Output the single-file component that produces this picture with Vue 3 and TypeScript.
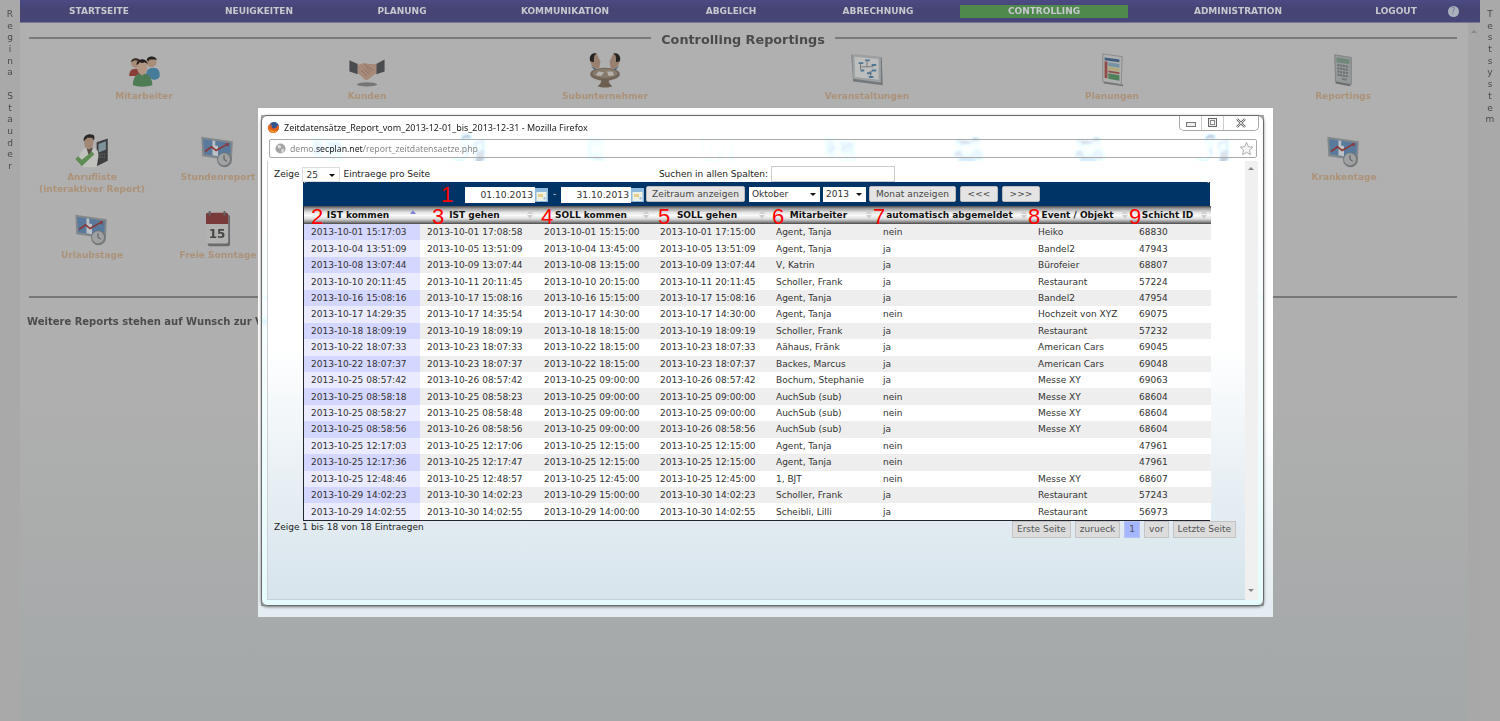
<script setup lang="ts">
type Row = string[];
const raw = `2013-10-01 15:17:03|2013-10-01 17:08:58|2013-10-01 15:15:00|2013-10-01 17:15:00|Agent, Tanja|nein|Heiko|68830
2013-10-04 13:51:09|2013-10-05 13:51:09|2013-10-04 13:45:00|2013-10-05 13:51:09|Agent, Tanja|ja|Bandel2|47943
2013-10-08 13:07:44|2013-10-09 13:07:44|2013-10-08 13:15:00|2013-10-09 13:07:44|V, Katrin|ja|Bürofeier|68807
2013-10-10 20:11:45|2013-10-11 20:11:45|2013-10-10 20:15:00|2013-10-11 20:11:45|Scholler, Frank|ja|Restaurant|57224
2013-10-16 15:08:16|2013-10-17 15:08:16|2013-10-16 15:15:00|2013-10-17 15:08:16|Agent, Tanja|ja|Bandel2|47954
2013-10-17 14:29:35|2013-10-17 14:35:54|2013-10-17 14:30:00|2013-10-17 14:30:00|Agent, Tanja|nein|Hochzeit von XYZ|69075
2013-10-18 18:09:19|2013-10-19 18:09:19|2013-10-18 18:15:00|2013-10-19 18:09:19|Scholler, Frank|ja|Restaurant|57232
2013-10-22 18:07:33|2013-10-23 18:07:33|2013-10-22 18:15:00|2013-10-23 18:07:33|Aähaus, Fränk|ja|American Cars|69045
2013-10-22 18:07:37|2013-10-23 18:07:37|2013-10-22 18:15:00|2013-10-23 18:07:37|Backes, Marcus|ja|American Cars|69048
2013-10-25 08:57:42|2013-10-26 08:57:42|2013-10-25 09:00:00|2013-10-26 08:57:42|Bochum, Stephanie|ja|Messe XY|69063
2013-10-25 08:58:18|2013-10-25 08:58:23|2013-10-25 09:00:00|2013-10-25 09:00:00|AuchSub (sub)|nein|Messe XY|68604
2013-10-25 08:58:27|2013-10-25 08:58:48|2013-10-25 09:00:00|2013-10-25 09:00:00|AuchSub (sub)|nein|Messe XY|68604
2013-10-25 08:58:56|2013-10-26 08:58:56|2013-10-25 09:00:00|2013-10-26 08:58:56|AuchSub (sub)|ja|Messe XY|68604
2013-10-25 12:17:03|2013-10-25 12:17:06|2013-10-25 12:15:00|2013-10-25 12:15:00|Agent, Tanja|nein||47961
2013-10-25 12:17:36|2013-10-25 12:17:47|2013-10-25 12:15:00|2013-10-25 12:15:00|Agent, Tanja|nein||47961
2013-10-25 12:48:46|2013-10-25 12:48:57|2013-10-25 12:45:00|2013-10-25 12:45:00|1, BJT|nein|Messe XY|68607
2013-10-29 14:02:23|2013-10-30 14:02:23|2013-10-29 15:00:00|2013-10-30 14:02:23|Scholler, Frank|ja|Restaurant|57243
2013-10-29 14:02:55|2013-10-30 14:02:55|2013-10-29 14:00:00|2013-10-30 14:02:55|Scheibli, Lilli|ja|Restaurant|56973`;
const rows: Row[] = raw.split("\n").map((l) => l.split("|"));

const leftName = "Regina Stauder".split("");
const rightName = "Testsystem".split("");
const navItems = ["STARTSEITE", "NEUIGKEITEN", "PLANUNG", "KOMMUNIKATION", "ABGLEICH", "ABRECHNUNG", "CONTROLLING", "ADMINISTRATION", "LOGOUT"];

interface Tile { kind: string; lines: string[] }
const row1: Tile[] = [
  { kind: "people", lines: ["Mitarbeiter"] },
  { kind: "hands", lines: ["Kunden"] },
  { kind: "sub", lines: ["Subunternehmer"] },
  { kind: "board", lines: ["Veranstaltungen"] },
  { kind: "plan", lines: ["Planungen"] },
  { kind: "calc", lines: ["Reportings"] },
];
const row2: Tile[] = [
  { kind: "call", lines: ["Anrufliste", "(interaktiver Report)"] },
  { kind: "chart", lines: ["Stundenreport"] },
  { kind: "chart", lines: [] },
  { kind: "call", lines: [] },
  { kind: "plan", lines: [] },
  { kind: "board", lines: [] },
  { kind: "chart", lines: [] },
  { kind: "people", lines: [] },
  { kind: "people", lines: [] },
  { kind: "call", lines: [] },
  { kind: "chart", lines: ["Krankentage"] },
];
const row3: Tile[] = [
  { kind: "chart", lines: ["Urlaubstage"] },
  { kind: "cal", lines: ["Freie Sonntage"] },
];

interface Head { label: string; num: string; left: number; sorted?: boolean }
const heads: Head[] = [
  { label: "IST kommen", num: "2", left: 7, sorted: true },
  { label: "IST gehen", num: "3", left: 12 },
  { label: "SOLL kommen", num: "4", left: 4 },
  { label: "SOLL gehen", num: "5", left: 5 },
  { label: "Mitarbeiter", num: "6", left: 3 },
  { label: "automatisch abgemeldet", num: "7", left: -3 },
  { label: "Event / Objekt", num: "8", left: -3 },
  { label: "Schicht ID", num: "9", left: -3 },
];
const widths = [116, 117, 116, 116, 107, 155, 101, 79];
</script>

<template>
  <div class="page">
    <aside class="strip">
      <span v-for="(c, i) in leftName" :key="i" class="letter">{{ c === " " ? "\u00a0" : c }}</span>
    </aside>

    <div class="main">
      <nav class="nav">
        <a v-for="item in navItems" :key="item" class="nav-item" :class="{ active: item === 'CONTROLLING' }">{{ item }}</a>
        <span class="nav-help">?</span>
      </nav>

      <div class="body">
        <main class="report">
          <div class="title-row">
            <span class="rule"></span>
            <h1 class="title">Controlling Reportings</h1>
            <span class="rule"></span>
          </div>

          <section v-for="(grid, g) in [row1, row2, row3]" :key="g" class="tiles" :class="'tiles-' + g">
            <div v-for="(t, i) in grid" :key="i" class="tile">
              <svg class="ico" viewBox="0 0 40 40">
                <template v-if="t.kind === 'people'">
                  <path d="M22 26c0-6 3-9 8-9s7 3 7 8c0 3-3 5-7 5z" fill="#3f9bd0" />
                  <circle cx="28" cy="11" r="5.500" fill="#d9a98a" /><path d="M23 9c0-5 10-6 11 0l-2-1h-6l-1 2z" fill="#2e2a28" />
                  <path d="M4 26c0-5 2-8 7-8s6 3 6 8z" fill="#c7433b" />
                  <circle cx="11" cy="12" r="5" fill="#d9a98a" /><path d="M6 11c0-5 9-6 10-1l-6-1z" fill="#4a342a" />
                  <path d="M8 36c0-9 4-13 10-13s11 4 11 13c-6 2-15 2-21 0z" fill="#4f9c5a" />
                  <path d="M15 22l3 4 3-4z" fill="#e3b08e" />
                  <path d="M12.500 15c0 6 2 9 5.500 9s5.500-3 5.500-9-2-6-5.500-6-5.500 1-5.500 6z" fill="#e7b595" />
                  <path d="M12 14c-1-7 11-9 12-1l-3-2-3 1-3-1-1 2z" fill="#2f2622" />
                </template>
                <template v-else-if="t.kind === 'hands'">
                  <ellipse cx="20" cy="35" rx="11" ry="2.200" fill="#8f8f8f" />
                  <path d="M1 9l9 4v11l-9-3z" fill="#5b5d61" /><path d="M39 8l-9 5v11l9-3z" fill="#5b5d61" />
                  <path d="M10 14l7-2 5 1 8 0v10l-9 7c-3 1-5-1-6-3l-5-4z" fill="#d9a68a" />
                  <path d="M17 13c2 4 7 3 10 7M14 20l6 6M16.500 18l6 6M19.500 17l5 5" stroke="#ad7d62" stroke-width=".8" fill="none" />
                </template>
                <template v-else-if="t.kind === 'sub'">
                  <path d="M5 15l5 7 4-2zM35 15l-5 7-4-2z" fill="#3f87b8" />
                  <path d="M4 8c0-5 4-7 7-6l4 8-1 7c-3 2-6 1-8-2-1-2-2-4-2-7z" fill="#c59a7e" />
                  <path d="M4 10C2 4 7 0 11 2c-3 1-3 4-3 9z" fill="#2f2d2c" />
                  <path d="M36 8c0-5-4-7-7-6l-4 8 1 7c3 2 6 1 8-2 1-2 2-4 2-7z" fill="#c59a7e" />
                  <path d="M36 10c2-6-3-10-7-8 3 1 3 4 3 9z" fill="#2f2d2c" />
                  <ellipse cx="20" cy="24" rx="16" ry="7" fill="#8f7a62" />
                  <ellipse cx="20" cy="23" rx="13.500" ry="5" fill="#a9957d" />
                  <path d="M13 21l6 1-3 4-6-1zM22 21l6 0 2 4-6 1z" fill="#ddd8cf" />
                  <path d="M16 30h8c0 3 1 5 4 7-4 2-12 2-16 0 3-2 4-4 4-7z" fill="#8b7459" />
                </template>
                <template v-else-if="t.kind === 'board'">
                  <path d="M3 3l33 3 1 30-32-4z" fill="#8d9498" />
                  <path d="M4 2l31 3 0 28-30-4z" fill="#bcc3c6" /><path d="M6.500 5l26 2.500V30L7 27z" fill="#e6e9ea" />
                  <path d="M11 11h5v2h-5zM18 8h5v2h-5zM25 13h5v2h-5zM13 19h4v2h-4zM25 19h5v2h-5zM20 22h5v2h-5zM22 26h5v2h-5z" fill="#4f95c4" />
                  <path d="M13 13v6M20 10v6H14M20 16h7M25 21l-3 1M24 24v2" stroke="#666" stroke-width=".7" fill="none" />
                </template>
                <template v-else-if="t.kind === 'plan'">
                  <path d="M11 34l21 3v-2L11 32z" fill="#8d8f8d" />
                  <path d="M10 2l21 3-1 30-20-3z" fill="#d4d7d5" stroke="#8f9290" stroke-width=".7" />
                  <path d="M12 6l16 2v3L12 9z" fill="#3f72ab" /><path d="M12 10l3 .4v18L12 28z" fill="#c9534a" />
                  <path d="M16 11l12 2v4l-12-2z" fill="#7fb6d6" /><path d="M16 16l12 2v3l-12-2z" fill="#e0d070" />
                  <path d="M16 20l12 2v2l-12-2z" fill="#d0574e" /><path d="M16 23l12 2v6l-12-2z" fill="#4fa160" />
                </template>
                <template v-else-if="t.kind === 'calc'">
                  <path d="M12 34l16 3v-2l-16-3z" fill="#7d8183" />
                  <path d="M11 3l18 3v29l-17-3z" fill="#b5bbbb" stroke="#868b8b" stroke-width=".7" />
                  <path d="M13 6l14 2v5l-14-2z" fill="#7fa88f" />
                  <path d="M14 14l12 2M14 17.500l12 2M14 21l12 2M14 24.500l12 2" stroke="#83898a" stroke-width="2.200" stroke-dasharray="2.200 .8" />
                  <path d="M19 29l5 1" stroke="#8c9192" stroke-width="2" />
                </template>
                <template v-else-if="t.kind === 'call'">
                  <path d="M25 10l12-4v24l-12 6z" fill="#4a4c4e" /><path d="M27 12l8-3v9l-8 3z" fill="#8fb6c0" />
                  <path d="M28 23h6M28 26h6" stroke="#74777a" stroke-width="1.500" stroke-dasharray="1.500 1" />
                  <path d="M6 34c0-12 2-17 9-18l7 0c4 1 5 5 5 9l-2 12H12z" fill="#ecebe6" />
                  <path d="M14 16l3 10 4-10z" fill="#6b5d52" />
                  <path d="M11.500 9c0 6 2 8.500 5 8.500s5-3 5-8-2-6-5-6-5 1-5 5.500z" fill="#d2a283" />
                  <path d="M11 9c-1-7 6-9 10-7 2 1 2 3 1 6l-2-3-5 0z" fill="#34312f" />
                  <path d="M2 28l3-3 4 4 11-9 2.500 3L9 36z" fill="#62b24f" />
                </template>
                <template v-else-if="t.kind === 'chart'">
                  <path d="M2 4l34 5-1 21L3 25z" fill="#9ea6ab" /><path d="M4 6.500l30 4.200-1 17L5 23z" fill="#5d97d2" />
                  <path d="M14 8l3 .5v5l3 .5v11l-6-1z" fill="#e5ecf2" />
                  <path d="M6 20l7-5 5 4 12-7" stroke="#cb3b3b" stroke-width="1.800" fill="none" />
                  <path d="M28 11l4 0-1 4z" fill="#cb3b3b" />
                  <circle cx="27" cy="29" r="8" fill="#8d9193" />
                  <circle cx="26.500" cy="28.500" r="6.500" fill="#c2c5c6" /><path d="M26.500 24v4.500l3 2" stroke="#555" stroke-width=".9" fill="none" />
                </template>
                <template v-else>
                  <rect x="9" y="4" width="24" height="34" rx="2" fill="#808284" />
                  <rect x="7" y="2" width="24" height="33" rx="2" fill="#d9d9d6" />
                  <path d="M7 4a2 2 0 0 1 2-2h20a2 2 0 0 1 2 2v10H7z" fill="#ad4040" />
                  <path d="M11 0v5M27 0v5" stroke="#777" stroke-width="2" />
                  <text x="19" y="29" text-anchor="middle" class="cal-num">15</text>
                </template>
              </svg>
              <div v-for="l in t.lines" :key="l" class="tile-label">{{ l }}</div>
            </div>
          </section>

          <div class="hr"></div>
          <p class="further">Weitere Reports stehen auf Wunsch zur Verfügung.</p>
        </main>
        <div class="page-scroll"><i class="sc-up"></i></div>
      </div>
    </div>

    <aside class="strip">
      <span v-for="(c, i) in rightName" :key="i" class="letter">{{ c }}</span>
    </aside>

    <div class="popup">
      <div class="window">
        <div class="titlebar">
          <svg class="fx" viewBox="0 0 14 14">
            <circle cx="7.500" cy="6.500" r="5.500" fill="#34548f" />
            <path d="M12.800 5c.7 3.800-2 8-6.300 8C3 13 .7 10 1 6.500c.3-1.200.8-2.200 1.500-3-.1.800 0 1.300.3 1.700.6-1 1.500-1.500 2.700-1.600-.8 1-1 2-.4 3 .7 1.200 2 1.700 3.300 1.300 1.800-.5 2.500-1.700 2.700-3.300.2.300.4.300.7.400z" fill="#e2611c" />
            <path d="M2 8c.5 2.500 2.500 4.300 5 4.300 2 0 3.500-1 4.500-2.300-1.500 1-3.500 1.300-5.500.6C4 10 2.800 9.200 2 8z" fill="#f2a52c" />
          </svg>
          <span class="win-title">Zeitdatensätze_Report_vom_2013-12-01_bis_2013-12-31 - Mozilla Firefox</span>
          <div class="win-btns">
            <span class="wb"><i class="wb-min"></i></span>
            <span class="wb"><i class="wb-max"></i></span>
            <span class="wb wb-last">
              <svg viewBox="0 0 12 10" class="wb-x"><path d="M2 1l8 8M10 1L2 9" stroke="#666" stroke-width="2.400" fill="none" /><path d="M2 1l8 8M10 1L2 9" stroke="#eee" stroke-width=".9" fill="none" /></svg>
            </span>
          </div>
        </div>
        <div class="urlbar">
          <svg class="globe" viewBox="0 0 12 12"><circle cx="6" cy="6" r="5.500" fill="#a4a4a4" /><path d="M3 2l3 1 1 2-2 1-2-1zM7 7l3-1-1 4-2 1z" fill="#e0e0e0" /></svg>
          <span class="url"><span class="u-dim">demo.</span><span class="u-host">secplan.net</span><span class="u-dim">/report_zeitdatensaetze.php</span></span>
          <svg class="star" viewBox="0 0 16 16"><path d="M8 1.500l2 4.500 4.800.5-3.600 3.200 1 4.800L8 12.100l-4.200 2.400 1-4.800L1.200 6.500 6 6z" fill="#f4f4f4" stroke="#aaa" /></svg>
        </div>

        <div class="client">
          <div class="content">
            <div class="top-row">
              <div class="len">
                Zeige
                <span class="sel sel-len">25</span>
                Eintraege pro Seite
              </div>
              <label class="search">Suchen in allen Spalten: <input class="search-in" type="text" /></label>
            </div>

            <div class="tbl">
              <div class="toolbar">
                <span class="num-one">1</span>
                <input class="date" value="01.10.2013" readonly />
                <svg class="cal" viewBox="0 0 13 14"><rect width="13" height="14" fill="#8fb9dd" /><rect x="1.500" y="4" width="10" height="9" fill="#eef1e4" /><rect x="3" y="6" width="5" height="3" fill="#e9d08a" /><rect x="8.500" y="9" width="2" height="2.500" fill="#9fc4e4" /></svg>
                <span class="dash">-</span>
                <input class="date" value="31.10.2013" readonly />
                <svg class="cal" viewBox="0 0 13 14"><rect width="13" height="14" fill="#8fb9dd" /><rect x="1.500" y="4" width="10" height="9" fill="#eef1e4" /><rect x="3" y="6" width="5" height="3" fill="#e9d08a" /><rect x="8.500" y="9" width="2" height="2.500" fill="#9fc4e4" /></svg>
                <button class="btn b-range">Zeitraum anzeigen</button>
                <span class="sel sel-month">Oktober</span>
                <span class="sel sel-year">2013</span>
                <button class="btn b-month">Monat anzeigen</button>
                <button class="btn b-prev">&lt;&lt;&lt;</button>
                <button class="btn b-next">&gt;&gt;&gt;</button>
              </div>
              <table class="data">
                <colgroup>
                  <col v-for="(w, i) in widths" :key="i" :style="{ width: w + 'px' }" />
                </colgroup>
                <thead>
                  <tr>
                    <th v-for="h in heads" :key="h.num">
                      <span class="num" :style="{ left: h.left + 'px' }">{{ h.num }}</span>
                      {{ h.label }}
                      <span class="sort"><i class="up" :class="{ on: h.sorted }"></i><i class="down" :class="{ off: h.sorted }"></i></span>
                    </th>
                  </tr>
                </thead>
                <tbody>
                  <tr v-for="(r, i) in rows" :key="i" :class="i % 2 ? 'even' : 'odd'">
                    <td v-for="(c, j) in r" :key="j" :class="{ s1: j === 0 }">{{ c }}</td>
                  </tr>
                </tbody>
              </table>
            </div>

            <div class="bottom-row">
              <div class="info">Zeige 1 bis 18 von 18 Eintraegen</div>
              <div class="pager">
                <a class="pg">Erste Seite</a>
                <a class="pg">zurueck</a>
                <a class="pg cur">1</a>
                <a class="pg">vor</a>
                <a class="pg">Letzte Seite</a>
              </div>
            </div>
          </div>
          <div class="win-scroll"><i class="sc-up"></i><i class="sc-down"></i></div>
        </div>
      </div>
    </div>
  </div>
</template>

<style>
html, body { margin: 0; padding: 0; }
</style>

<style scoped>
.page {
  position: relative;
  width: 1500px;
  height: 721px;
  overflow: hidden;
  display: flex;
  font-family: "DejaVu Sans", sans-serif;
  font-size: 9px;
  background: linear-gradient(#b0b0b0 0%, #afafaf 55%, #a4a8a9 100%);
  color: #333;
}
.strip {
  width: 20px;
  flex: none;
  display: flex;
  flex-direction: column;
  align-items: center;
  padding-top: 9px;
  box-sizing: border-box;
  background: #a9a9a9;
  color: #4a4a4a;
}
.letter { line-height: 11.700px; height: 11.700px; font-size: 9px; }
.main { flex: 1; min-width: 0; display: flex; flex-direction: column; }
.nav {
  height: 23px;
  box-sizing: border-box;
  flex: none;
  display: grid;
  grid-template-columns: 158px 162px 124px 202px 130px 164px 168px 220px 96px 18px;
  align-items: center;
  background: linear-gradient(#4b4a84 0%, #454472 45%, #47467a 100%);
  border-bottom: 1px solid #77778f;
  padding-top: 1px;
}
.nav-item {
  text-align: center;
  font-weight: 700;
  font-size: 9px;
  color: #c8c9cf;
  line-height: 13px;
}
.nav-item.active { background: #4f8a4c; }
.nav-help {
  width: 11px;
  height: 11px;
  border-radius: 50%;
  background: #a9b2bd;
  color: #6f7590;
  font-size: 8px;
  line-height: 11px;
  text-align: center;
  justify-self: center;
}
.body { flex: 1; min-height: 0; display: flex; }
.report { flex: 1; min-width: 0; }
.page-scroll {
  width: 12px;
  flex: none;
  background: #a8a8a8;
  display: flex;
  justify-content: center;
  padding-top: 7px;
  box-sizing: border-box;
}
.title-row {
  display: flex;
  align-items: center;
  gap: 10px;
  margin: 8px 11px 0 9px;
  height: 18px;
}
.rule { flex: 1; height: 0; border-top: 2px solid #7a7a7a; margin-top: -5px; }
.title { margin: 0; font-size: 12.800px; font-weight: 700; color: #4b4b4b; line-height: 18px; }
.tiles { display: grid; justify-items: center; align-content: start; margin-left: 9px; }
.tiles-0 { grid-template-columns: 230px 216px 260px 264px 226px 236px; height: 72px; margin-top: 2px; padding-top: 1px; box-sizing: border-box; }
.tiles-1 { grid-template-columns: 126px 126px 94px 188px 66px 176px 72px 182px 60px 188px 74px; height: 78px; margin-top: 7px; padding-top: 3px; box-sizing: border-box; }
.tiles-2 { grid-template-columns: 126px 126px; height: 50px; padding-top: 3px; box-sizing: border-box; }
.tile { text-align: center; white-space: nowrap; width: 0; display: flex; flex-direction: column; align-items: center; }
.ico { width: 38px; height: 37px; flex: none; filter: saturate(.7) brightness(.82) blur(.35px); }
.cal-num { font: 700 13px "DejaVu Sans", sans-serif; fill: #555; }
.tile-label {
  font-weight: 700;
  font-size: 9px;
  line-height: 11.500px;
  color: #ac9279;
  margin-top: 2px;
}
.tile-label + .tile-label { margin-top: 0; }
.hr { margin: 38px 11px 0 9px; border-top: 2px solid #777; }
.further { margin: 18px 0 0 7px; font-weight: 700; font-size: 10px; color: #4c4c4c; line-height: 12px; white-space: nowrap; }

.popup {
  position: absolute;
  left: 258px;
  top: 108px;
  width: 1015px;
  height: 509px;
  box-sizing: border-box;
  border-style: solid;
  border-width: 7px 9px 11px 3px;
  border-image: linear-gradient(#ffffff 60%, #e3edf2) 1;
}
.window {
  height: 100%;
  box-sizing: border-box;
  display: flex;
  flex-direction: column;
  border: 1px solid #6a6a6a;
  border-radius: 6px;
  box-shadow: 0 1px 3px rgba(0, 0, 0, .5);
  padding: 0 5px 5px;
  background: linear-gradient(rgba(255, 255, 255, .62) 0%, rgba(255, 255, 255, .62) 15%, #e6fbfd 100%);
  backdrop-filter: blur(1.500px) sepia(1) hue-rotate(170deg) saturate(1.400) brightness(1.550);
  overflow: hidden;
}
.titlebar { height: 23px; flex: none; display: flex; align-items: flex-start; position: relative; color: #111; }
.fx { width: 13px; height: 13px; margin: 5px 4px 0 0; flex: none; }
.win-title { font-family: "Noto Sans", sans-serif; font-size: 9px; line-height: 12px; margin-top: 5.500px; white-space: nowrap; color: #222; }
.win-btns {
  position: absolute;
  right: -1px;
  top: -1px;
  width: 80px;
  height: 16px;
  box-sizing: border-box;
  display: flex;
  border: 1px solid #a9a9a9;
  border-top: 0;
  border-radius: 0 0 5px 5px;
  background: rgba(255, 255, 255, .8);
}
.wb { width: 21px; display: flex; align-items: center; justify-content: center; border-right: 1px solid #ccc; }
.wb-last { flex: 1; border-right: 0; }
.wb-min { width: 8px; height: 3px; border: 1px solid #777; margin-top: 3px; background: #eee; }
.wb-max { width: 7px; height: 7px; border: 1px solid #666; box-shadow: inset 0 0 0 1px #eee, inset 0 0 0 2px #888; }
.wb-x { width: 12px; height: 10px; }
.urlbar {
  height: 19px;
  flex: none;
  box-sizing: border-box;
  margin: 0 1px 3px 2px;
  border: 1px solid #aaa;
  border-radius: 2px;
  display: flex;
  align-items: center;
  padding: 0 2px 0 5px;
  background: rgba(255, 255, 255, .35);
}
.globe { width: 11px; height: 11px; margin-right: 4px; flex: none; }
.url { font-family: "Noto Sans", sans-serif; font-size: 8.700px; flex: 1; padding-top: 1px; }
.u-dim { color: #8a8a8a; }
.u-host { color: #222; }
.star { width: 15px; height: 15px; flex: none; }
.client { flex: 1; min-height: 0; display: flex; }
.content {
  flex: 1;
  min-width: 0;
  box-sizing: border-box;
  border-left: 1px solid #cfcfcf;
  border-bottom: 1px solid #c5d0d4;
  padding-top: 5px;
  background: linear-gradient(#fff 0%, #fff 42%, #e3ecf2 80%, #d7e4ec 100%);
  display: flex;
  flex-direction: column;
}
.win-scroll {
  width: 13px;
  flex: none;
  background: #f0f0f0;
  position: relative;
}
.sc-up, .sc-down { display: block; width: 0; height: 0; border-left: 3px solid transparent; border-right: 3px solid transparent; }
.sc-up { border-bottom: 3px solid #888; }
.sc-down { border-top: 3px solid #888; }
.win-scroll .sc-up { position: absolute; left: 3px; top: 6px; }
.win-scroll .sc-down { position: absolute; left: 3px; bottom: 8px; }
.top-row {
  display: flex;
  justify-content: space-between;
  align-items: center;
  height: 16px;
  padding: 0 350px 0 6px;
  color: #222;
  font-size: 9px;
  flex: none;
}
.len { display: flex; align-items: center; gap: 3px; }
.search { display: flex; align-items: center; gap: 3px; }
.search-in { width: 124px; height: 16px; box-sizing: border-box; border: 1px solid #ccc; padding: 0; background: #fff; }
.sel {
  position: relative;
  display: inline-block;
  box-sizing: border-box;
  background: #fff;
  font-size: 9px;
  line-height: 15px;
  padding-left: 3px;
  color: #333;
}
.sel::after {
  content: "";
  position: absolute;
  right: 4px;
  top: 6px;
  border-left: 3px solid transparent;
  border-right: 3px solid transparent;
  border-top: 3px solid #111;
}
.sel-len { width: 38px; height: 15px; border: 1px solid #ddd; }
.sel-month { width: 71px; height: 15px; margin-left: 4px; }
.sel-year { width: 43px; height: 15px; margin-left: 3px; }
.tbl {
  margin-left: 35px;
  width: 907px;
  box-sizing: border-box;
  border: 1px solid #23262e;
  border-top: 0;
  flex: none;
}
.toolbar {
  height: 24px;
  background: #003366;
  border-radius: 4px 4px 0 0;
  margin: 0 -1px;
  display: flex;
  align-items: center;
  padding-left: 139px;
  box-sizing: border-box;
}
.num-one { width: 23px; font: 22px/22px "Liberation Sans", sans-serif; color: #f00; flex: none; margin-top: 1px; margin-left: -1px; margin-right: 1px; }
.date {
  width: 70px;
  height: 16px;
  box-sizing: border-box;
  border: 0;
  padding: 0 2px 0 0;
  text-align: right;
  font: 9.200px "DejaVu Sans", sans-serif;
  color: #333;
  background: #fff;
  margin-top: 1px;
}
.cal { width: 13px; height: 14px; margin-top: 1px; }
.dash { width: 13px; text-align: center; color: #ddd; font-size: 9px; }
.btn {
  height: 16px;
  box-sizing: border-box;
  border: 1px solid #bbb;
  border-radius: 2px;
  background: #e4e4e4;
  color: #444;
  font: 9px "DejaVu Sans", sans-serif;
  padding: 0;
  letter-spacing: .1px;
}
.b-range { width: 99px; margin-left: 2px; }
.b-month { width: 87px; margin-left: 3px; }
.b-prev { width: 38px; margin-left: 4px; }
.b-next { width: 38px; margin-left: 4px; }
.data { border-collapse: collapse; table-layout: fixed; width: 905px; }
.data th {
  position: relative;
  height: 18px;
  padding: 0 8px 0 0;
  font-size: 9px;
  font-weight: 700;
  color: #111;
  text-align: center;
  white-space: nowrap;
  background: linear-gradient(#4c4c4c 0%, #9a9a9a 14%, #e2e2e2 35%, #fbfbfb 52%, #dcdcdc 72%, #8f8f8f 88%, #474747 100%);
}
.num {
  position: absolute;
  top: 2px;
  font: 400 22px/18px "Liberation Sans", sans-serif;
  color: #f00;
}
.sort { position: absolute; right: 4px; top: 4px; display: flex; flex-direction: column; gap: 1px; }
.sort i { display: block; width: 0; height: 0; border-left: 3px solid transparent; border-right: 3px solid transparent; }
.sort .up { border-bottom: 4px solid #cfcfcf; }
.sort .down { border-top: 4px solid #cfcfcf; }
.sort .up.on { border-bottom-color: #7f84d6; }
.sort .down.off { opacity: 0; }
.data td {
  height: 16.440px;
  padding: 0 0 0 7px;
  font-size: 9px;
  color: #333;
  white-space: nowrap;
  overflow: hidden;
}
.odd td { background: #eeeeee; }
.even td { background: #ffffff; }
.odd td.s1 { background: #d3d6ff; }
.even td.s1 { background: #eaebff; }
.bottom-row {
  display: flex;
  justify-content: space-between;
  align-items: flex-start;
  padding: 0 9px 0 6px;
  flex: none;
}
.info { font-size: 9px; line-height: 13px; color: #222; }
.pager { display: flex; gap: 4px; }
.pg {
  height: 17px;
  box-sizing: border-box;
  padding: 0 4px;
  border: 1px solid #c4c4c4;
  background: #dcdcdc;
  line-height: 15px;
  font-size: 9px;
  color: #555;
}
.pg.cur { background: #a3b6ff; border-color: #b8c4ef; }
</style>
